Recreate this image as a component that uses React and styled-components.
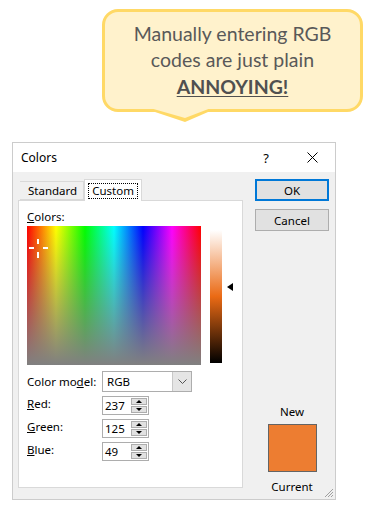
import React from "react";
import styled, { createGlobalStyle } from "styled-components";

const GlobalStyle = createGlobalStyle`
  body {
    margin: 0;
    background: #ffffff;
    font-family: "Noto Sans", "Liberation Sans", sans-serif;
  }
`;

const Page = styled.div`
  width: 372px;
  height: 509px;
  display: flex;
  flex-direction: column;
  overflow: hidden;
`;

const BubbleArea = styled.div`
  padding: 9px 0 0 102px;
`;

const Bubble = styled.div`
  position: relative;
  box-sizing: border-box;
  width: 261px;
  height: 103px;
  border: 3px solid #ffd966;
  border-radius: 16px;
  background: #fff2cc;
  display: flex;
  flex-direction: column;
  align-items: center;
  justify-content: center;
  font-family: Lato, "Open Sans", sans-serif;
  font-size: 19.5px;
  line-height: 26.5px;
  color: #595959;
  text-align: center;

  &::before,
  &::after {
    content: "";
    position: absolute;
    width: 0;
    height: 0;
    border-style: solid;
  }
  &::before {
    left: 41px;
    top: 100%;
    border-width: 13px 30px 0 39px;
    border-color: #ffd966 transparent transparent transparent;
  }
  &::after {
    left: 45px;
    top: calc(100% - 1px);
    border-width: 10px 26px 0 35px;
    border-color: #fff2cc transparent transparent transparent;
  }
`;

const Shout = styled.span`
  font-weight: 700;
  text-decoration: underline;
  text-underline-offset: 2px;
  color: #505050;
`;

const Dialog = styled.div`
  margin: 30px 0 0 12px;
  width: 324px;
  height: 358px;
  box-sizing: border-box;
  border: 1px solid #cccccc;
  display: flex;
  flex-direction: column;
  position: relative;
  font-size: 11px;
  color: #000;
`;

const TitleBar = styled.div`
  height: 29px;
  background: #fff;
  display: flex;
  align-items: center;
  padding-left: 8px;
  font-size: 12px;
`;

const Title = styled.span`
  flex: 1;
`;

const TitleButton = styled.span`
  width: 46px;
  display: flex;
  justify-content: center;
  align-items: center;
  font-size: 13px;
`;

const Body = styled.div`
  flex: 1;
  background: #f0f0f0;
  display: flex;
  padding: 7px 0 11px 5px;
`;

const TabArea = styled.div`
  width: 225px;
  display: flex;
  flex-direction: column;
`;

const TabStrip = styled.div`
  height: 21px;
  display: flex;
  align-items: flex-end;
  padding-left: 2px;
  position: relative;
  z-index: 1;
`;

const Tab = styled.div`
  box-sizing: border-box;
  height: ${(p) => (p.$active ? "22px" : "19px")};
  padding: 0 ${(p) => (p.$active ? "3px" : "6px 0 8px")};
  margin-bottom: ${(p) => (p.$active ? "-1px" : "0")};
  background: ${(p) => (p.$active ? "#fff" : "#f0f0f0")};
  border: 1px solid #d9d9d9;
  border-bottom: ${(p) => (p.$active ? "none" : "1px solid #d9d9d9")};
  border-left: ${(p) => (p.$active ? "1px solid #d9d9d9" : "none")};
  display: flex;
  align-items: center;
  font-size: 11.5px;
`;

const Focus = styled.span`
  border: 1px dotted #000;
  padding: 0 3px;
  line-height: 14px;
`;

const Panel = styled.div`
  flex: 1;
  background: #fff;
  border: 1px solid #d9d9d9;
  padding: 9px 0 0 8px;
  display: flex;
  flex-direction: column;
`;

const Label = styled.div`
  font-size: 11.5px;
  line-height: 14px;
  width: ${(p) => p.$width || "auto"};
  margin-top: ${(p) => p.$raise || "0"};
`;

const PickerRow = styled.div`
  display: flex;
  margin-top: 2px;
`;

const Spectrum = styled.div`
  position: relative;
  width: 174px;
  height: 139px;
  background: linear-gradient(to bottom, rgba(128, 128, 128, 0), rgb(128, 128, 128)),
    linear-gradient(
      to right,
      #ff0000 0%,
      #ffff00 16.67%,
      #00ff00 33.33%,
      #00ffff 50%,
      #0000ff 66.67%,
      #ff00ff 83.33%,
      #ff0000 100%
    );
`;

const Arm = styled.span`
  position: absolute;
  background: #fff;
`;

const LumColumn = styled.div`
  position: relative;
  margin-left: 9px;
  padding-top: 4px;
  width: 26px;
`;

const LumBar = styled.div`
  width: 12px;
  height: 133px;
  background: linear-gradient(
    to bottom,
    #ffffff 0%,
    hsl(24, 84%, 50%) 50%,
    #000000 100%
  );
`;

const LumArrow = styled.div`
  position: absolute;
  left: 17px;
  top: 57px;
  width: 0;
  height: 0;
  border-style: solid;
  border-width: 4px 6px 4px 0;
  border-color: transparent #000 transparent transparent;
`;

const FormRow = styled.div`
  display: flex;
  align-items: center;
  margin-top: ${(p) => p.$gap || "4px"};
`;

const Select = styled.div`
  box-sizing: border-box;
  width: 90px;
  height: 21px;
  border: 1px solid #adadad;
  display: flex;
  background: #fff;
`;

const SelectValue = styled.span`
  flex: 1;
  padding-left: 4px;
  display: flex;
  align-items: center;
  font-size: 11.5px;
`;

const SelectButton = styled.span`
  width: 18px;
  background: #e5e5e5;
  border-left: 1px solid #c8c8c8;
  display: flex;
  align-items: center;
  justify-content: center;
`;

const Spinner = styled.div`
  box-sizing: border-box;
  width: 47px;
  height: 19px;
  border: 1px solid #adadad;
  display: flex;
  background: #fff;
`;

const SpinValue = styled.span`
  flex: 1;
  padding-left: 2px;
  display: flex;
  align-items: center;
  font-size: 11.5px;
`;

const SpinButtons = styled.span`
  width: 16px;
  display: flex;
  flex-direction: column;
  gap: 1px;
  padding: 1px 1px 1px 0;
`;

const SpinButton = styled.span`
  flex: 1;
  background: #e1e1e1;
  border: 1px solid #adadad;
  display: flex;
  align-items: center;
  justify-content: center;
  &::before {
    content: "";
    border-style: solid;
    border-color: ${(p) =>
      p.$down ? "#000 transparent transparent" : "transparent transparent #000"};
    border-width: ${(p) => (p.$down ? "3px 3px 0" : "0 3px 3px")};
  }
`;

const Side = styled.div`
  width: 74px;
  margin-left: 12px;
  display: flex;
  flex-direction: column;
  align-items: center;
`;

const Button = styled.div`
  box-sizing: border-box;
  width: 74px;
  height: 22px;
  margin-bottom: 8px;
  background: #e1e1e1;
  border: ${(p) => (p.$primary ? "2px solid #0078d7" : "1px solid #adadad")};
  display: flex;
  align-items: center;
  justify-content: center;
  font-size: 11.5px;
`;

const SwatchBlock = styled.div`
  margin-top: auto;
  margin-bottom: -7px;
  display: flex;
  flex-direction: column;
  align-items: center;
  font-size: 11.5px;
  line-height: 16px;
`;

const Swatch = styled.div`
  width: 49px;
  height: 48px;
  margin: 4px 0 7px;
  box-sizing: border-box;
  border: 1px solid #646464;
  background: rgb(237, 125, 49);
`;

const Gripper = styled.svg`
  position: absolute;
  right: 1px;
  bottom: 1px;
`;

const u = (ch) => <span style={{ textDecoration: "underline" }}>{ch}</span>;

function SpinBox({ value }) {
  return (
    <Spinner>
      <SpinValue>{value}</SpinValue>
      <SpinButtons>
        <SpinButton />
        <SpinButton $down />
      </SpinButtons>
    </Spinner>
  );
}

export default function App() {
  return (
    <Page>
      <GlobalStyle />
      <BubbleArea>
        <Bubble>
          <div>Manually entering RGB</div>
          <div>codes are just plain</div>
          <Shout>ANNOYING!</Shout>
        </Bubble>
      </BubbleArea>

      <Dialog>
        <TitleBar>
          <Title>Colors</Title>
          <TitleButton>?</TitleButton>
          <TitleButton>
            <svg width="11" height="11" viewBox="0 0 11 11">
              <path d="M0.5 0.5 L10.5 10.5 M10.5 0.5 L0.5 10.5" stroke="#000" strokeWidth="1" />
            </svg>
          </TitleButton>
        </TitleBar>
        <Body>
          <TabArea>
            <TabStrip>
              <Tab>Standard</Tab>
              <Tab $active>
                <Focus>Custom</Focus>
              </Tab>
            </TabStrip>
            <Panel>
              <Label>{u("C")}olors:</Label>
              <PickerRow>
                <Spectrum>
                  <Arm style={{ left: 10, top: 13, width: 2, height: 5 }} />
                  <Arm style={{ left: 10, top: 26, width: 2, height: 6 }} />
                  <Arm style={{ left: 2, top: 21, width: 5, height: 2 }} />
                  <Arm style={{ left: 16, top: 21, width: 5, height: 2 }} />
                </Spectrum>
                <LumColumn>
                  <LumBar />
                  <LumArrow />
                </LumColumn>
              </PickerRow>
              <FormRow $gap="6px">
                <Label $width="75px">Color mo{u("d")}el:</Label>
                <Select>
                  <SelectValue>RGB</SelectValue>
                  <SelectButton>
                    <svg width="9" height="5" viewBox="0 0 9 5">
                      <path d="M0.5 0.5 L4.5 4.5 L8.5 0.5" fill="none" stroke="#555" strokeWidth="1" />
                    </svg>
                  </SelectButton>
                </Select>
              </FormRow>
              <FormRow>
                <Label $width="75px" $raise="-4px">{u("R")}ed:</Label>
                <SpinBox value="237" />
              </FormRow>
              <FormRow>
                <Label $width="75px" $raise="-4px">{u("G")}reen:</Label>
                <SpinBox value="125" />
              </FormRow>
              <FormRow>
                <Label $width="75px" $raise="-4px">{u("B")}lue:</Label>
                <SpinBox value="49" />
              </FormRow>
            </Panel>
          </TabArea>
          <Side>
            <Button $primary>OK</Button>
            <Button>Cancel</Button>
            <SwatchBlock>
              <span>New</span>
              <Swatch />
              <span>Current</span>
            </SwatchBlock>
          </Side>
        </Body>
        <Gripper width="11" height="11" viewBox="0 0 11 11">
          <path d="M10 2 L2 10 M10 5 L5 10 M10 8 L8 10" stroke="#a0a0a0" strokeWidth="1" />
        </Gripper>
      </Dialog>
    </Page>
  );
}
